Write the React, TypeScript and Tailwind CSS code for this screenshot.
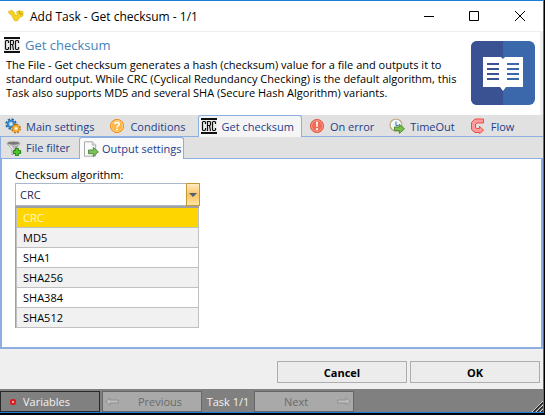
import { useState, type ReactNode } from 'react';

const algorithms = ['CRC', 'MD5', 'SHA1', 'SHA256', 'SHA384', 'SHA512'];

function AppLogo() {
  return (
    <svg width="16" height="16" viewBox="0 0 16 16" aria-hidden="true">
      <path d="M.5 3.5 3.5 2.3 6 4 7.5 7.5 9.5 6.5 8.5 4 11 2.8 15 3.5 14.8 8 11.5 9.5 9.5 12.8H6.5L3.5 7 1 5.5Z" fill="#f5d31c" stroke="#d6b41c" strokeWidth=".7" />
      <path d="m11 3.2 1 3 2.5-.4" fill="none" stroke="#a98b12" strokeWidth=".8" />
    </svg>
  );
}

function CrcIcon() {
  return (
    <svg width="16" height="16" viewBox="0 0 16 16" aria-hidden="true">
      <path d="M0 2h16v12H0z" fill="#eee" />
      <path d="M0 0h16v2H0zM0 14h16v2H0z" fill="#111" />
      <path d="M4.5 6V4.2L3.8 3.5H2.2L1.5 4.2v7.6l.7.7h1.6l.7-.7V10M6.5 13V3.5h2.3l.7.7v2.6l-.7.7H6.5M8.5 7.5l1 5.5M14.5 6V4.2l-.7-.7h-1.6l-.7.7v7.6l.7.7h1.6l.7-.7V10" fill="none" stroke="#111" strokeWidth="1.2" />
    </svg>
  );
}

function GearsIcon() {
  return (
    <svg width="16" height="16" viewBox="0 0 16 16" aria-hidden="true">
      <circle cx="6" cy="6" r="4.4" fill="none" stroke="#2368a5" strokeWidth="2.6" strokeDasharray="2.1 1.35" />
      <circle cx="6" cy="6" r="3.3" fill="#8cc5ef" stroke="#3685c4" strokeWidth="2" />
      <circle cx="6" cy="6" r="1.4" fill="#d8e8f4" />
      <circle cx="11" cy="10.5" r="3.8" fill="none" stroke="#b8690c" strokeWidth="2.2" strokeDasharray="1.8 1.18" />
      <circle cx="11" cy="10.5" r="2.8" fill="#ffdb80" stroke="#f0a024" strokeWidth="1.8" />
      <circle cx="11" cy="10.5" r="1.1" fill="#fff" />
    </svg>
  );
}

function QuestionIcon() {
  return (
    <svg width="16" height="16" viewBox="0 0 16 16" aria-hidden="true">
      <circle cx="8" cy="8" r="6.6" fill="#ffb642" stroke="#f08a1c" />
      <circle cx="8" cy="8" r="5.6" fill="none" stroke="#ffd68c" strokeWidth=".8" />
      <path d="M5.8 6.2C5.8 3.6 10.3 3.7 10.2 6.2 10.2 7.7 8 7.6 8 9.4" fill="none" stroke="#fff" strokeWidth="1.7" />
      <circle cx="8" cy="11.6" r="1" fill="#fff" />
    </svg>
  );
}

function ErrorIcon() {
  return (
    <svg width="16" height="16" viewBox="0 0 16 16" aria-hidden="true">
      <circle cx="8" cy="8" r="6.6" fill="#ee6a56" stroke="#e2604c" />
      <circle cx="8" cy="8" r="5.4" fill="none" stroke="#f9a698" strokeWidth=".8" />
      <path d="M7 3.7h2L8.6 9H7.4z" fill="#fff" />
      <circle cx="8" cy="11.2" r="1.1" fill="#fff" />
    </svg>
  );
}

function TimeoutIcon() {
  return (
    <svg width="16" height="16" viewBox="0 0 16 16" aria-hidden="true">
      <circle cx="7" cy="7" r="6" fill="#c2dcf0" stroke="#c4ab7c" strokeWidth="1.2" />
      <circle cx="7" cy="7" r="4.4" fill="#e8f3fb" stroke="#fff" strokeWidth="1.2" />
      <path d="M7 3.5v4h2.5" fill="none" stroke="#47729a" />
      <path d="M5.5 9h4.8V6.3l5.2 4.5-5.2 4.6v-2.7H5.5z" fill="#7dbd4d" stroke="#3f8524" strokeWidth=".9" />
    </svg>
  );
}

function FlowIcon() {
  return (
    <svg width="16" height="16" viewBox="0 0 16 16" aria-hidden="true">
      <path d="M13.5 1v4H7L5.5 6v3.5l1.5 1h2.5V8.2l4 4.1-4 3.2v-1H5L1.5 11.5v-7L5 1z" fill="#ff9a9a" stroke="#ee4b4b" />
    </svg>
  );
}

function FilterIcon() {
  return (
    <svg width="16" height="16" viewBox="0 0 16 16" aria-hidden="true">
      <path d="M1 3.5 6 9v5.5l3-1V9l5-5.5z" fill="#b5b5b5" stroke="#858585" strokeWidth=".7" />
      <path d="M3.5 5 7 9v5" fill="none" stroke="#eee" strokeWidth="1.2" />
      <ellipse cx="7.5" cy="3.2" rx="6.5" ry="2" fill="#777" stroke="#c6c6c6" strokeWidth="1" />
      <path d="M9.6 8.3h2.8v2.3h2.3v2.8h-2.3v2.3H9.6v-2.3H7.3v-2.8h2.3z" fill="#57c730" stroke="#137a10" strokeWidth=".9" />
    </svg>
  );
}

function OutputIcon() {
  return (
    <svg width="16" height="16" viewBox="0 0 16 16" aria-hidden="true">
      <path d="M1.5.8h7.8l3.4 3.4v11H1.5z" fill="#fafafa" stroke="#a8a8a8" />
      <path d="M9.3.8v3.4h3.4" fill="#ddd" stroke="#a8a8a8" strokeWidth=".8" />
      <path d="M5.5 9h4.8V6.3l5 4.5-5 4.6v-2.7H5.5z" fill="#7dbd5d" stroke="#458c32" strokeWidth=".9" />
    </svg>
  );
}

function BookIcon() {
  return (
    <svg className="mt-[9px] shrink-0" width="64" height="64" viewBox="0 0 64 64" aria-hidden="true">
      <rect width="64" height="64" rx="6" fill="#3b68ab" />
      <path d="M6 0h26v64H6a6 6 0 0 1-6-6V6a6 6 0 0 1 6-6Z" fill="#3b5292" />
      <path d="M12 16h18l2 2 2-2h18v30H35l-3 4-3-4H12z" fill="#fff" />
      <path d="M16 23h12M16 28h12M16 33h12M16 38h12" stroke="#3b5292" strokeWidth="2" />
      <path d="M36 23h12M36 28h12M36 33h12M36 38h12" stroke="#3b68ab" strokeWidth="2" />
    </svg>
  );
}

function LongArrow({ flip = false }: { flip?: boolean }) {
  return (
    <svg className={flip ? 'rotate-180' : ''} width="14" height="9" viewBox="0 0 14 9" aria-hidden="true">
      <path d="M.7 3H9V.8l4.3 3.7L9 7.7V6H.7z" fill="#bdbdbd" stroke="#8a8a8a" strokeWidth=".8" />
    </svg>
  );
}

const tabs: { name: string; icon: ReactNode }[] = [
  { name: 'Main settings', icon: <GearsIcon /> },
  { name: 'Conditions', icon: <QuestionIcon /> },
  { name: 'Get checksum', icon: <CrcIcon /> },
  { name: 'On error', icon: <ErrorIcon /> },
  { name: 'TimeOut', icon: <TimeoutIcon /> },
  { name: 'Flow', icon: <FlowIcon /> },
];

export default function App() {
  const [tab, setTab] = useState('Get checksum');
  const [subTab, setSubTab] = useState('Output settings');
  const [algorithm, setAlgorithm] = useState('CRC');
  const [open, setOpen] = useState(true);

  return (
    <div className="flex h-screen flex-col bg-black pr-px pb-0.5 font-['Open_Sans','Liberation_Sans',sans-serif] text-[11px] leading-[13px] text-black">
      <div className="flex min-h-0 flex-1 flex-col border-t border-r border-b border-[#1a7fd4] bg-[#efefef]">
        <header className="flex h-[31px] shrink-0 items-center border-b border-[#efefef] bg-white pl-2">
          <AppLogo />
          <h1 className="ml-1.5 flex-1 text-[12px]">Add Task - Get checksum - 1/1</h1>
          <div className="flex h-full">
            <button aria-label="Minimize" className="flex w-[45px] items-center justify-center">
              <svg width="10" height="10"><path d="M0 5.5h10" stroke="#000" /></svg>
            </button>
            <button aria-label="Maximize" className="flex w-[45px] items-center justify-center">
              <svg width="10" height="10"><path d="M.5.5h9v9h-9z" fill="none" stroke="#000" /></svg>
            </button>
            <button aria-label="Close" className="flex w-[47px] items-center justify-center">
              <svg width="10" height="10"><path d="m0 0 10 10M10 0 0 10" stroke="#000" /></svg>
            </button>
          </div>
        </header>

        <section className="mr-[3px] flex h-[83px] shrink-0 bg-white pr-[5px] pl-1">
          <div className="flex-1 pt-[5px]">
            <h2 className="flex items-center gap-[5px] text-[13px] leading-4 text-[#4585bb]">
              <CrcIcon />
              Get checksum
            </h2>
            <p className="mt-[5px] max-w-[460px] pl-0.5 leading-[14px]">
              The File - Get checksum generates a hash (checksum) value for a file and outputs it to standard output. While CRC (Cyclical Redundancy Checking) is the default algorithm, this Task also supports MD5 and several SHA (Secure Hash Algorithm) variants.
            </p>
          </div>
          <BookIcon />
        </section>

        <div role="tablist" aria-label="Task sections" className="flex h-[22px] shrink-0 border-b border-[#8caee1] bg-[#e1e1e1] pl-0.5 text-[#1f3d8a]">
          {tabs.map(({ name, icon }) => (
            <button
              key={name}
              role="tab"
              aria-selected={tab === name}
              onClick={() => setTab(name)}
              className={`mr-1 flex items-center gap-[5px] rounded-t-[3px] border-x border-t pr-[7px] pl-0.5 whitespace-nowrap ${tab === name ? '-mb-px border-[#8caee1] bg-[#f5f5f5] pb-px' : 'border-transparent'}`}
            >
              {icon}
              {name}
            </button>
          ))}
        </div>

        <div role="tablist" aria-label="Checksum sections" className="flex h-[22px] shrink-0 border-b border-[#8caee1] bg-[#e1e1e1] text-[#1f3d8a]">
          <button
            role="tab"
            aria-selected={subTab === 'File filter'}
            onClick={() => setSubTab('File filter')}
            className={`flex w-[79px] items-center gap-1 border-l border-[#8caee1] pl-[5px] ${subTab === 'File filter' ? '-mb-px bg-white' : ''}`}
          >
            <FilterIcon />
            File filter
          </button>
          <button
            role="tab"
            aria-selected={subTab === 'Output settings'}
            onClick={() => setSubTab('Output settings')}
            className={`flex w-[105px] items-center gap-[3px] rounded-t-[3px] border-x border-t border-[#8caee1] pl-[3px] whitespace-nowrap ${subTab === 'Output settings' ? '-mb-px bg-[#fafafa]' : ''}`}
          >
            <OutputIcon />
            Output settings
          </button>
        </div>

        <main className="min-h-0 flex-1 border-x-2 border-b-2 border-[#8caee1] bg-white pt-[9px] pl-[13px]">
          <label htmlFor="algorithm" className="block">Checksum algorithm:</label>
          <div className="relative mt-0.5 w-[185px]">
            <div className="flex h-[23px]">
              <select
                id="algorithm"
                value={algorithm}
                onChange={(e) => setAlgorithm(e.target.value)}
                className="min-w-0 flex-1 appearance-none rounded-none border border-r-0 border-[#abb6c6] bg-white pl-1 text-[#1c2b52]"
              >
                {algorithms.map((name) => (
                  <option key={name}>{name}</option>
                ))}
              </select>
              <button
                aria-label="Show algorithms"
                aria-expanded={open}
                onClick={() => setOpen(!open)}
                className="flex w-3.5 items-center justify-center border border-[#c39a35] bg-linear-to-b from-[#fdebc0] via-[#fcc462] to-[#fde6a0]"
              >
                <svg width="8" height="4"><path d="M0 0h8L4 4z" fill="#4f5f78" /></svg>
              </button>
            </div>
            {open && (
              <ul role="listbox" aria-label="Checksum algorithm" className="absolute top-full right-px left-0 border-t-2 border-l border-[#a0a0a0] bg-white">
                {algorithms.map((name) => (
                  <li
                    key={name}
                    role="option"
                    aria-selected={algorithm === name}
                    onClick={() => setAlgorithm(name)}
                    className={`flex h-5 items-center border-r border-b border-l border-[#c0c0c0] pl-1.5 ${algorithm === name ? 'bg-[#ffd500] text-[#fff8d0]' : 'odd:bg-white even:bg-[#f1f1f1]'}`}
                  >
                    {name}
                  </li>
                ))}
              </ul>
            )}
          </div>
        </main>

        <div className="flex h-10 shrink-0 justify-end gap-[3px] pt-3 pr-[3px] font-bold">
          <button className="h-[22px] w-[130px] border border-[#adadad] bg-[#ececec]">Cancel</button>
          <button className="h-[22px] w-[130px] border border-[#adadad] bg-[#ececec]">OK</button>
        </div>

        <footer className="flex h-[23px] shrink-0 items-end bg-[#808080] text-[#f2f2f2]">
          <button className="flex h-[21px] w-[100px] items-center gap-[7px] border border-[#292929] pl-[9px]">
            <svg width="6" height="6" viewBox="0 0 6 6" aria-hidden="true"><rect width="6" height="6" rx="2" fill="#d62020" /><rect x="2" y="2" width="2" height="2" fill="#ff9c9c" /></svg>
            Variables
          </button>
          <button disabled className="ml-0.5 flex h-[21px] w-[100px] items-center border border-[#666] bg-[#a9a9a9] pl-0.5 text-[#6b6b6b]">
            <LongArrow flip />
            <span className="flex-1 text-center">Previous</span>
          </button>
          <span className="flex h-[21px] w-[52px] items-center justify-center whitespace-nowrap">Task 1/1</span>
          <button disabled className="flex h-[21px] w-[100px] items-center border border-[#666] bg-[#a9a9a9] pr-0.5 text-[#6b6b6b]">
            <span className="flex-1 text-center">Next</span>
            <LongArrow />
          </button>
          <svg className="ml-auto" width="11" height="11" aria-hidden="true">
            <path d="M0 11 11 0M4 11l7-7M8 11l3-3" stroke="#ddd" />
            <path d="M1.5 11 11 1.5M5.5 11 11 5.5M9.5 11 11 9.5" stroke="#222" strokeWidth="1.4" />
          </svg>
        </footer>
      </div>
    </div>
  );
}
